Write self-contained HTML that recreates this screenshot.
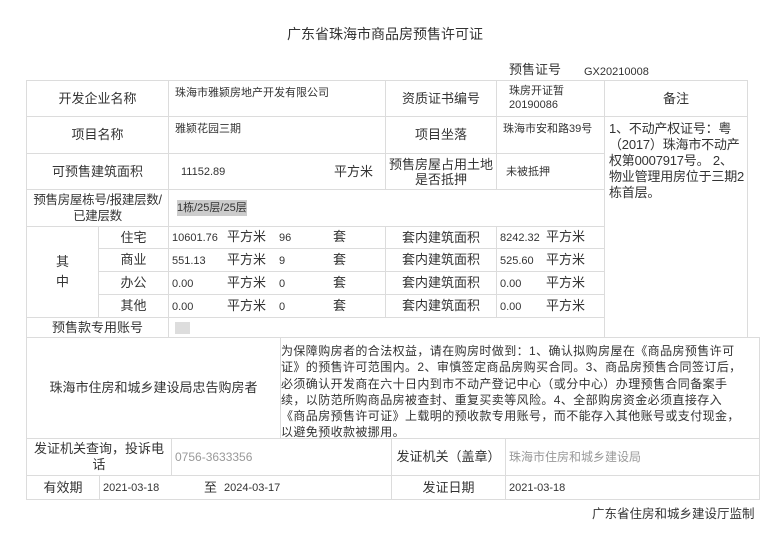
<!DOCTYPE html><html><head><meta charset="utf-8"><style>
body{margin:0;width:770px;height:541px;background:#fff;position:relative;overflow:hidden;font-family:"Liberation Sans","Noto Sans CJK SC",sans-serif;color:#333}
.c{position:absolute;border:1px solid #dcdcdc;box-sizing:border-box;display:flex;align-items:center;justify-content:center;text-align:center;font-size:13px;line-height:16px}
.v{justify-content:flex-start;text-align:left;padding-left:6px;font-size:11px}
.t{position:absolute;font-size:12px;line-height:14px;white-space:nowrap}
</style></head><body>
<div class="t" style="left:287px;top:27px;font-size:14px">广东省珠海市商品房预售许可证</div>
<div class="t" style="left:509px;top:63px;font-size:13px">预售证号</div>
<div class="t" style="left:584px;top:65px;font-size:11px">GX20210008</div>

<div class="c" style="left:26px;top:80px;width:143px;height:37px">开发企业名称</div>
<div class="c v" style="left:168px;top:80px;width:218px;height:37px;align-items:flex-start;padding-top:4px">珠海市雅颍房地产开发有限公司</div>
<div class="c" style="left:385px;top:80px;width:112px;height:37px">资质证书编号</div>
<div class="c v" style="left:496px;top:80px;width:109px;height:37px;align-items:flex-start;padding-top:3px;padding-left:12px;line-height:14px">珠房开证暂<br>20190086</div>
<div class="c" style="left:604px;top:80px;width:144px;height:37px">备注</div>

<div class="c" style="left:26px;top:116px;width:143px;height:38px">项目名称</div>
<div class="c v" style="left:168px;top:116px;width:218px;height:38px;align-items:flex-start;padding-top:4px">雅颍花园三期</div>
<div class="c" style="left:385px;top:116px;width:112px;height:38px">项目坐落</div>
<div class="c v" style="left:496px;top:116px;width:109px;height:38px;align-items:flex-start;padding-top:4px">珠海市安和路39号</div>
<div class="c" style="left:604px;top:116px;width:144px;height:222px;align-items:flex-start;justify-content:flex-start;text-align:left;padding:4px 0 0 4px;font-size:13px;line-height:16px;white-space:nowrap;letter-spacing:-0.2px">1、不动产权证号：粤<br>（2017）珠海市不动产<br>权第0007917号。 2、<br>物业管理用房位于三期2<br>栋首层。</div>

<div class="c" style="left:26px;top:153px;width:143px;height:37px">可预售建筑面积</div>
<div class="c v" style="left:168px;top:153px;width:218px;height:37px;padding-left:12px;font-size:11px">11152.89<span style="position:absolute;left:165px;font-size:13px">平方米</span></div>
<div class="c" style="left:385px;top:153px;width:112px;height:37px;line-height:15px">预售房屋占用土地<br>是否抵押</div>
<div class="c v" style="left:496px;top:153px;width:109px;height:37px;padding-left:9px">未被抵押</div>

<div class="c" style="left:26px;top:189px;width:143px;height:38px;line-height:16px;font-size:12.5px;letter-spacing:-0.3px;white-space:nowrap">预售房屋栋号/报建层数/<br>已建层数</div>
<div class="c v" style="left:168px;top:189px;width:437px;height:38px;padding-left:8px"><span style="background:#ccc">1栋/25层/25层</span></div>

<div class="c" style="left:26px;top:226px;width:73px;height:92px;line-height:20px">其<br>中</div>
<div class="c" style="left:98px;top:226px;width:71px;height:23px">住宅</div>
<div class="c" style="left:98px;top:248px;width:71px;height:24px">商业</div>
<div class="c" style="left:98px;top:271px;width:71px;height:24px">办公</div>
<div class="c" style="left:98px;top:294px;width:71px;height:24px">其他</div>
<div class="c" style="left:168px;top:226px;width:218px;height:23px"></div>
<div class="c" style="left:168px;top:248px;width:218px;height:24px"></div>
<div class="c" style="left:168px;top:271px;width:218px;height:24px"></div>
<div class="c" style="left:168px;top:294px;width:218px;height:24px"></div>
<div class="c" style="left:385px;top:226px;width:112px;height:23px">套内建筑面积</div>
<div class="c" style="left:385px;top:248px;width:112px;height:24px">套内建筑面积</div>
<div class="c" style="left:385px;top:271px;width:112px;height:24px">套内建筑面积</div>
<div class="c" style="left:385px;top:294px;width:112px;height:24px">套内建筑面积</div>
<div class="c" style="left:496px;top:226px;width:109px;height:23px"></div>
<div class="c" style="left:496px;top:248px;width:109px;height:24px"></div>
<div class="c" style="left:496px;top:271px;width:109px;height:24px"></div>
<div class="c" style="left:496px;top:294px;width:109px;height:24px"></div>

<div class="t" style="left:172px;top:231px;font-size:11px">10601.76</div><div class="t" style="left:227px;top:230px;font-size:13px">平方米</div><div class="t" style="left:279px;top:231px;font-size:11px">96</div><div class="t" style="left:333px;top:230px;font-size:13px">套</div>
<div class="t" style="left:172px;top:254px;font-size:11px">551.13</div><div class="t" style="left:227px;top:253px;font-size:13px">平方米</div><div class="t" style="left:279px;top:254px;font-size:11px">9</div><div class="t" style="left:333px;top:253px;font-size:13px">套</div>
<div class="t" style="left:172px;top:277px;font-size:11px">0.00</div><div class="t" style="left:227px;top:276px;font-size:13px">平方米</div><div class="t" style="left:279px;top:277px;font-size:11px">0</div><div class="t" style="left:333px;top:276px;font-size:13px">套</div>
<div class="t" style="left:172px;top:300px;font-size:11px">0.00</div><div class="t" style="left:227px;top:299px;font-size:13px">平方米</div><div class="t" style="left:279px;top:300px;font-size:11px">0</div><div class="t" style="left:333px;top:299px;font-size:13px">套</div>
<div class="t" style="left:500px;top:231px;font-size:11px">8242.32</div><div class="t" style="left:546px;top:230px;font-size:13px">平方米</div>
<div class="t" style="left:500px;top:254px;font-size:11px">525.60</div><div class="t" style="left:546px;top:253px;font-size:13px">平方米</div>
<div class="t" style="left:500px;top:277px;font-size:11px">0.00</div><div class="t" style="left:546px;top:276px;font-size:13px">平方米</div>
<div class="t" style="left:500px;top:300px;font-size:11px">0.00</div><div class="t" style="left:546px;top:299px;font-size:13px">平方米</div>

<div class="c" style="left:26px;top:317px;width:143px;height:21px">预售款专用账号</div>
<div class="c v" style="left:168px;top:317px;width:437px;height:21px"><span style="display:inline-block;width:15px;height:12px;background:#ddd"></span></div>

<div class="c" style="left:26px;top:337px;width:255px;height:102px">珠海市住房和城乡建设局忠告购房者</div>
<div class="c" style="left:280px;top:337px;width:480px;height:102px;justify-content:flex-start;text-align:left;padding:5px 0 0 0;align-items:flex-start;font-size:12px;line-height:16.3px;white-space:nowrap;letter-spacing:0.4px">为保障购房者的合法权益，请在购房时做到：1、确认拟购房屋在《商品房预售许可<br>证》的预售许可范围内。2、审慎签定商品房购买合同。3、商品房预售合同签订后，<br>必须确认开发商在六十日内到市不动产登记中心（或分中心）办理预售合同备案手<br>续，以防范所购商品房被查封、重复买卖等风险。4、全部购房资金必须直接存入<br>《商品房预售许可证》上载明的预收款专用账号，而不能存入其他账号或支付现金，<br>以避免预收款被挪用。</div>

<div class="c" style="left:26px;top:438px;width:146px;height:38px;line-height:16px">发证机关查询，投诉电<br>话</div>
<div class="c v" style="left:171px;top:438px;width:221px;height:38px;color:#999;font-size:12px;padding-left:3px">0756-3633356</div>
<div class="c" style="left:391px;top:438px;width:115px;height:38px">发证机关（盖章）</div>
<div class="c v" style="left:505px;top:438px;width:255px;height:38px;color:#999;font-size:12px;padding-left:3px">珠海市住房和城乡建设局</div>

<div class="c" style="left:26px;top:475px;width:74px;height:25px">有效期</div>
<div class="c v" style="left:99px;top:475px;width:293px;height:25px;padding-left:3px">2021-03-18<span style="position:absolute;left:104px;font-size:13px">至</span><span style="position:absolute;left:124px">2024-03-17</span></div>
<div class="c" style="left:391px;top:475px;width:115px;height:25px">发证日期</div>
<div class="c v" style="left:505px;top:475px;width:255px;height:25px;padding-left:3px">2021-03-18</div>

<div class="t" style="left:592px;top:507px;font-size:12.5px">广东省住房和城乡建设厅监制</div>
</body></html>
